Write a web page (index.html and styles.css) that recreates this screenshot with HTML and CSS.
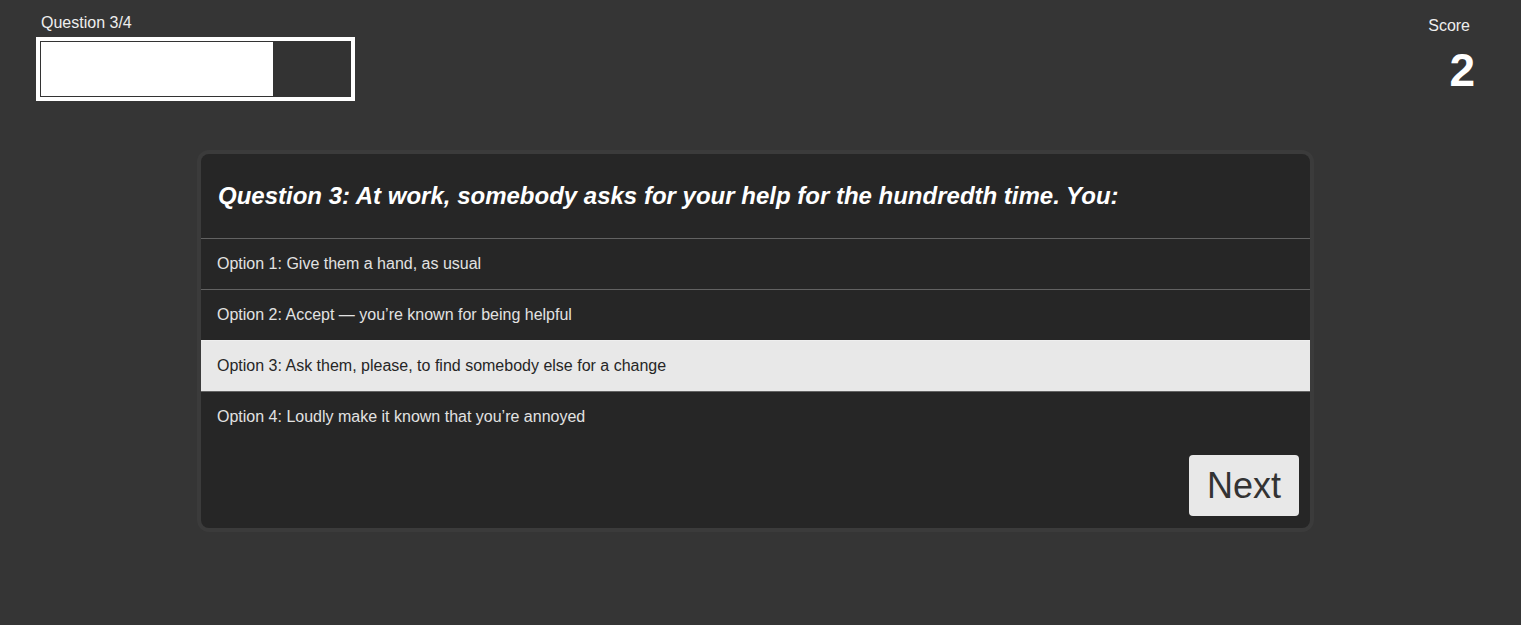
FILE: index.html
```html
<!DOCTYPE html>
<html lang="en">
<head>
<meta charset="utf-8">
<title>Quiz</title>
<link rel="stylesheet" href="styles.css">
</head>
<body>
<header class="top">
  <div class="progress-block">
    <div class="progress-label">Question 3/4</div>
    <div class="progress">
      <div class="progress-fill" style="width: 75%"></div>
    </div>
  </div>
  <div class="score-block">
    <div class="score-label">Score</div>
    <div class="score-value">2</div>
  </div>
</header>
<main class="card">
  <div class="card-inner">
    <h2 class="question">Question 3: At work, somebody asks for your help for the hundredth time. You:</h2>
    <ul class="options">
      <li class="option">Option 1: Give them a hand, as usual</li>
      <li class="option">Option 2: Accept — you’re known for being helpful</li>
      <li class="option selected">Option 3: Ask them, please, to find somebody else for a change</li>
      <li class="option">Option 4: Loudly make it known that you’re annoyed</li>
    </ul>
    <div class="actions">
      <button class="next">Next</button>
    </div>
  </div>
</main>
</body>
</html>
```

FILE: styles.css
```css
* { box-sizing: border-box; }

body {
  margin: 0;
  background: #353535;
  font-family: "Liberation Sans", Arial, sans-serif;
  color: #eeeeee;
}

.top {
  display: flex;
  justify-content: space-between;
  align-items: flex-start;
  padding: 0 46px 0 36px;
}

.progress-block {
  padding-top: 14px;
}

.progress-label {
  font-size: 16px;
  line-height: 18px;
  margin-left: 5px;
  color: #eeeeee;
}

.progress {
  margin-top: 5px;
  width: 319px;
  height: 64px;
  border: 4px solid #ffffff;
  padding: 1px;
  background: #333333;
}

.progress-fill {
  height: 100%;
  background: #ffffff;
}

.score-block {
  display: flex;
  flex-direction: column;
  align-items: flex-end;
  padding-top: 17px;
}

.score-label {
  font-size: 16px;
  line-height: 18px;
  margin-right: 5px;
  color: #eeeeee;
}

.score-value {
  margin-top: 9px;
  font-size: 46px;
  line-height: 53px;
  font-weight: bold;
  color: #ffffff;
}

.card {
  display: block;
  margin: 49px 0 0 197px;
  width: 1117px;
  border: 4px solid #3b3b3b;
  border-radius: 12px;
  background: #3b3b3b;
}

.card-inner {
  background: #262626;
  border-radius: 8px;
  overflow: hidden;
}

.question {
  margin: 0;
  padding: 28px 16px 28px 17px;
  font-size: 24px;
  line-height: 28px;
  font-weight: bold;
  font-style: italic;
  color: #ffffff;
}

.options {
  list-style: none;
  margin: 0;
  padding: 0;
}

.option {
  border-top: 1px solid rgba(255, 255, 255, 0.28);
  padding: 16px 16px;
  height: 51px;
  font-size: 16px;
  line-height: 18px;
  color: #e2e2e2;
}

.option.selected {
  background: #e8e8e8;
  color: #262626;
}

.actions {
  display: flex;
  justify-content: flex-end;
  padding: 13px 11px 12px;
}

.next {
  font-family: "Liberation Sans", Arial, sans-serif;
  font-size: 36px;
  line-height: 41px;
  padding: 10px 18px;
  border: none;
  border-radius: 4px;
  background: #e8e8e8;
  color: #333333;
}
```
